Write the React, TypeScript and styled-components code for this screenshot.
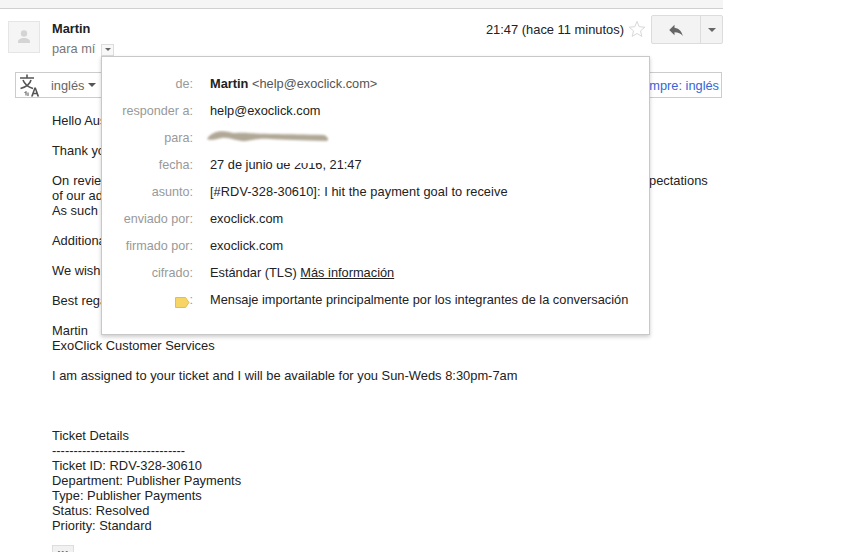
import React from "react";
import styled, { createGlobalStyle } from "styled-components";
import { MdReply } from "react-icons/md";

const Global = createGlobalStyle`
  html, body { margin: 0; padding: 0; background: #fff; }
  body { font-family: "Liberation Sans", Arial, sans-serif; font-size: 12.8px; color: #222; overflow: hidden; }
`;

const Page = styled.div`
  position: relative;
  width: 723px;
  height: 552px;
  overflow: visible;
`;
const TopStrip = styled.div`
  height: 8px;
  background: #f5f5f5;
  border-bottom: 1px solid #d0d0d0;
`;
const Header = styled.div`
  display: flex;
  align-items: flex-start;
  height: 63px;
  padding: 6px 0 0 8px;
  box-sizing: border-box;
`;
const Avatar = styled.div`
  width: 30px;
  height: 30px;
  margin-top: 6px;
  background: #f5f5f5;
  border: 1px solid #e5e5e5;
  display: flex;
  align-items: center;
  justify-content: center;
`;
const Sender = styled.div`
  margin-left: 12px;
  flex: 1;
  padding-top: 6px;
`;
const Name = styled.div`
  font-weight: bold;
  line-height: 15px;
`;
const ToLine = styled.div`
  display: flex;
  align-items: center;
  margin-top: 5px;
  color: #777;
  line-height: 15px;
`;
const SmallDrop = styled.span`
  display: flex;
  align-items: center;
  justify-content: center;
  width: 11px;
  height: 10px;
  margin: 2px 0 0 6px;
  border: 1px solid #ddd;
  background: #f8f8f8;
`;
const Caret = styled.span<{ $c?: string; $s?: number }>`
  display: inline-block;
  width: 0;
  height: 0;
  border-left: ${(p) => p.$s ?? 3}px solid transparent;
  border-right: ${(p) => p.$s ?? 3}px solid transparent;
  border-top: ${(p) => p.$s ?? 3}px solid ${(p) => p.$c ?? "#666"};
`;
const Time = styled.div`
  margin-top: 7px;
  color: #222;
  line-height: 15px;
  font-size: 12.9px;
  white-space: nowrap;
`;
const Star = styled.svg`
  width: 18px;
  height: 18px;
  margin: 5px 5px 0 4px;
  flex: none;
`;
const ReplyGroup = styled.div`
  display: flex;
  width: 72px;
  height: 29px;
  flex: none;
  box-sizing: border-box;
  border: 1px solid #dcdcdc;
  border-radius: 2px;
  background: #f3f3f3;
`;
const ReplyMain = styled.div`
  flex: 1;
  display: flex;
  align-items: center;
  justify-content: center;
  color: #666;
  font-size: 18px;
  border-right: 1px solid #dcdcdc;
`;
const ReplyMore = styled.div`
  width: 21px;
  display: flex;
  align-items: center;
  justify-content: center;
`;
const TranslateBar = styled.div`
  display: flex;
  align-items: center;
  height: 26px;
  box-sizing: border-box;
  margin-left: 15px;
  margin-right: 1px;
  border: 1px solid #ccc;
  padding: 0 2px 0 3px;
  color: #666;
`;
const TransIcon = styled.svg`
  width: 21px;
  height: 24px;
  flex: none;
`;
const Lang = styled.span`
  margin-left: 11px;
  margin-right: 4px;
`;
const Always = styled.a`
  margin-left: auto;
  color: #3367d6;
`;
const Body = styled.div`
  margin: 15px 0 0 52px;
  font-size: 12.9px;
  line-height: 15px;
  color: #222;
  white-space: nowrap;
`;
const Para = styled.div<{ $gap?: number }>`
  margin-bottom: ${(p) => p.$gap ?? 15}px;
`;
const LongLine = styled.span`
  word-spacing: 0.47px;
`;
const More = styled.div`
  width: 20px;
  height: 9px;
  margin-top: -3px;
  background: #f1f1f1;
  border: 1px solid #ddd;
  border-bottom: none;
  color: #666;
  font-size: 12px;
  font-weight: bold;
  line-height: 6px;
  text-align: center;
  letter-spacing: 0.5px;
  overflow: hidden;
`;
const Popup = styled.div`
  position: absolute;
  left: 101px;
  top: 56px;
  width: 549px;
  height: 279px;
  box-sizing: border-box;
  background: #fff;
  border: 1px solid #c8c8c8;
  box-shadow: 0 2px 4px rgba(0, 0, 0, 0.2);
  padding-top: 13px;
`;
const Row = styled.div`
  display: grid;
  grid-template-columns: 91px 1fr;
  column-gap: 17px;
  align-items: baseline;
  height: 27px;
  line-height: 27px;
`;
const Key = styled.div`
  color: #999;
  font-size: 12.6px;
  display: flex;
  justify-content: flex-end;
  align-items: baseline;
`;
const TagIcon = styled.svg`
  width: 15px;
  height: 11px;
  align-self: center;
  margin-top: 3px;
`;
const Val = styled.div`
  color: #222;
  white-space: nowrap;
`;
const Strong = styled.b`
  font-weight: bold;
`;
const Addr = styled.span`
  color: #555;
`;
const Subject = styled.span`
  letter-spacing: 0.06px;
`;
const Link = styled.a`
  color: #222;
  text-decoration: underline;
`;
const Smudge = styled.svg`
  position: absolute;
  left: 100px;
  top: 70px;
  width: 132px;
  height: 40px;
  pointer-events: none;
`;

const rows: [string, React.ReactNode][] = [
  ["de:", <><Strong>Martin</Strong> <Addr>&lt;help@exoclick.com&gt;</Addr></>],
  ["responder a:", "help@exoclick.com"],
  ["para:", "\u00a0"],
  ["fecha:", "27 de junio de 2016, 21:47"],
  ["asunto:", <Subject>[#RDV-328-30610]: I hit the payment goal to receive</Subject>],
  ["enviado por:", "exoclick.com"],
  ["firmado por:", "exoclick.com"],
  ["cifrado:", <>Estándar (TLS) <Link>Más información</Link></>],
  [
    "tag",
    "Mensaje importante principalmente por los integrantes de la conversación",
  ],
];

export default function App() {
  return (
    <Page>
      <Global />
      <TopStrip />
      <Header>
        <Avatar>
          <svg width="16" height="16" viewBox="0 0 16 16">
            <circle cx="8" cy="4.5" r="3.2" fill="#d4d4d4" />
            <path d="M2 14v-1.5C2 10.5 5 9 8 9s6 1.500 6 3.500V14z" fill="#d4d4d4" />
          </svg>
        </Avatar>
        <Sender>
          <Name>Martin</Name>
          <ToLine>
            para mí
            <SmallDrop>
              <Caret />
            </SmallDrop>
          </ToLine>
        </Sender>
        <Time>21:47 (hace 11 minutos)</Time>
        <Star viewBox="0 0 18 18">
          <path
            d="M9 1.500l2.200 5.200 5.600.5-4.300 3.700 1.300 5.500L9 13.500l-4.800 2.900 1.300-5.500L1.200 7.200l5.600-.5z"
            fill="none"
            stroke="#d8d8d8"
            strokeWidth="1"
          />
        </Star>
        <ReplyGroup>
          <ReplyMain>
            <MdReply />
          </ReplyMain>
          <ReplyMore>
            <Caret $s={4} />
          </ReplyMore>
        </ReplyGroup>
      </Header>
      <TranslateBar>
        <TransIcon viewBox="0 0 21 24" fill="none">
          <g stroke="#555" strokeWidth="1.600">
            <path d="M1 5h14M8 1.500V5" />
            <path d="M4 7c1.500 4 5 7 10 8.500M12 7c-1 4-5 7-10.500 8.500" />
          </g>
          <path d="M7 18.500v4M5.500 20l1.500-1.500M9 23v-3.500" stroke="#555" strokeWidth="1" />
          <path d="M12 23.500l3.300-9h1.600l3.300 9h-1.900l-.7-2.200h-3l-.7 2.200zM15 19.700h2.100l-1-3z" fill="#555" />
        </TransIcon>
        <Lang>inglés</Lang>
        <Caret $s={4} $c="#555" />
        <Always>Traducir siempre: inglés</Always>
      </TranslateBar>
      <Body>
        <Para>Hello Austin,</Para>
        <Para>Thank you for contacting us.</Para>
        <Para>
          <LongLine>
            On reviewing your account we found that the requested payment does not currently fully meet all the expectations
          </LongLine>
          <br />
          of our advertisers.
          <br />
          As such
        </Para>
        <Para>Additionally</Para>
        <Para>We wish you well.</Para>
        <Para>Best regards,</Para>
        <Para>
          Martin
          <br />
          ExoClick Customer Services
        </Para>
        <Para $gap={45}>I am assigned to your ticket and I will be available for you Sun-Weds 8:30pm-7am</Para>
        <Para $gap={15}>
          Ticket Details
          <br />
          -------------------------------
          <br />
          Ticket ID: RDV-328-30610
          <br />
          Department: Publisher Payments
          <br />
          Type: Publisher Payments
          <br />
          Status: Resolved
          <br />
          Priority: Standard
        </Para>
        <More>...</More>
      </Body>
      <Popup>
        {rows.map(([k, v]) => (
          <Row key={k}>
            <Key>
              {k === "tag" ? (
                <>
                  <TagIcon viewBox="0 0 15 11">
                    <path d="M.5.500h10l3.500 5-3.500 5H.5z" fill="#f7d565" stroke="#eabc47" />
                  </TagIcon>
                  <span>:</span>
                </>
              ) : (
                k
              )}
            </Key>
            <Val>{v}</Val>
          </Row>
        ))}
        <Smudge viewBox="0 0 132 40">
          <defs>
            <filter id="b">
              <feGaussianBlur stdDeviation="0.8" />
            </filter>
            <filter id="w">
              <feGaussianBlur stdDeviation="0.7" />
            </filter>
          </defs>
          <path
            d="M5 12C9 5 18 3 27 5C33 7 38 5 46 6C58 7 80 7 122 8C127 10 127 14 124 14C100 13 80 13 68 12C58 11 50 13 44 14C36 15 28 10 20 11C14 12 9 14 5 12Z"
            fill="#b0a796"
            filter="url(#b)"
          />
          <path d="M73 31L124 31L124 36L73 36Z" fill="#fff" filter="url(#w)" />
        </Smudge>
      </Popup>
    </Page>
  );
}
